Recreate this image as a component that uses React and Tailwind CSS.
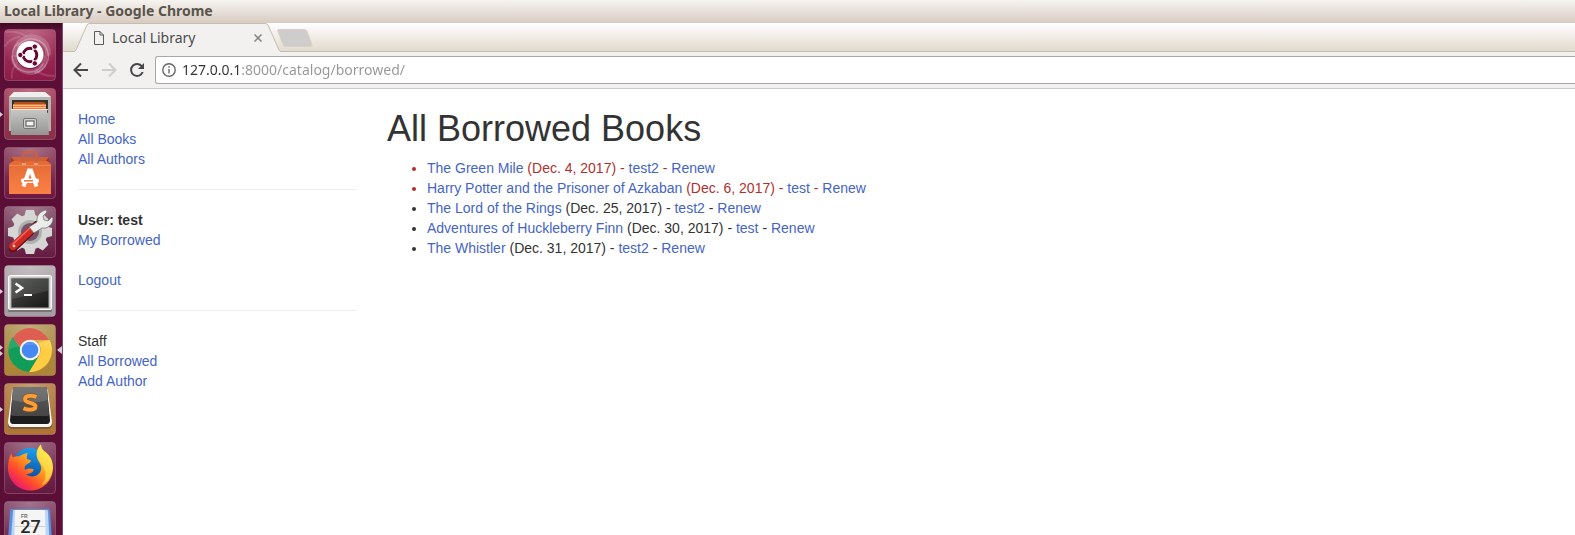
import { useId } from "react";

function Tile({ id, tint, children }) {
  return (
    <svg viewBox="0 0 52 52" className="block size-[52px]" aria-hidden="true">
      <defs>
        <linearGradient id={id} x1="0" y1="0" x2="0" y2="1">
          <stop offset="0" stopColor={tint[0]} />
          <stop offset="1" stopColor={tint[1]} />
        </linearGradient>
        <radialGradient id={id + "-shine"} cx=".5" cy="0" r=".75">
          <stop offset="0" stopColor="#fff" stopOpacity=".25" />
          <stop offset="1" stopColor="#fff" stopOpacity="0" />
        </radialGradient>
      </defs>
      <rect x=".5" y=".5" width="51" height="51" rx="3.5" fill={`url(#${id})`} stroke="#fff" strokeOpacity=".2" />
      <rect x="1" y="1" width="50" height="50" rx="3" fill={`url(#${id}-shine)`} />
      {children}
    </svg>
  );
}

function UbuntuIcon() {
  const id = useId();
  return (
    <Tile id={id} tint={["#a5385f", "#8d1b48"]}>
      <g fill="none" stroke="#fff" strokeLinecap="round">
        <path d="M14 17C22 5 41 9 44 24c2 10-5 18-13 20" strokeOpacity=".3" strokeWidth="1.500" />
        <path d="M39 35C32 48 12 44 9 32 7 25 9 18 14 14" strokeOpacity=".3" strokeWidth="1.500" />
        <path d="M12 25C11 13 24 5 35 10c7 3 9 10 9 14" strokeOpacity=".18" strokeWidth="6" />
        <path d="M40 29c1 11-11 17-21 12-5-2-9-7-9-12" strokeOpacity=".18" strokeWidth="6" />
        <path d="M2 3c8-1 15 1 20 4M1 17c3-5 8-8 14-9M50 47c-7 0-14-2-18-6M8 49c-1-5 1-10 4-14" strokeOpacity=".13" strokeWidth="2" />
      </g>
      <circle cx="26" cy="27" r="13.5" fill="#54052c" fillOpacity=".35" />
      <circle cx="26" cy="25.5" r="13.5" fill="#fff" />
      <circle cx="26" cy="26" r="6.8" fill="none" stroke="#6b0735" strokeWidth="3" />
      <path d="M26 26H16M26 26l5-8.700M26 26l5 8.700" stroke="#fff" strokeWidth="1.600" />
      <circle cx="26" cy="26" r="5.100" fill="#fff" />
      <g fill="#6b0735" stroke="#fff" strokeWidth="1">
        <circle cx="16.3" cy="26" r="2.7" />
        <circle cx="30.8" cy="17.6" r="2.7" />
        <circle cx="30.8" cy="34.4" r="2.7" />
      </g>
    </Tile>
  );
}

function FilesIcon() {
  const id = useId();
  return (
    <Tile id={id} tint={["#a8405b", "#8a3048"]}>
      <defs>
        <linearGradient id={id + "b"} x1="0" y1="0" x2="0" y2="1">
          <stop offset="0" stopColor="#c8c8c6" />
          <stop offset="1" stopColor="#949492" />
        </linearGradient>
      </defs>
      <path d="M10 4h31l6 5v34H5V9z" fill="#b5b5b2" />
      <path d="M10 4h31l6 5H5z" fill="#efefed" />
      <path d="M8 12h36v13H8z" fill="#34322f" />
      <path d="M10 14h30l2 2H10z" fill="#b44d19" />
      <path d="M9 16h33v5H9z" fill="#ef7b35" />
      <path d="M9 17.500h33M9 19.500h33" stroke="#ffc08b" />
      <path d="M7 21h36l2 26H7z" fill={`url(#${id}b)`} />
      <path d="M7 21.500h37" stroke="#e9e9e7" />
      <rect x="19.500" y="30.500" width="13" height="10" rx="1.500" fill="#d0d0ce" stroke="#747472" />
      <rect x="22" y="33" width="8" height="5" fill="#f4f4f2" stroke="#656563" strokeWidth="1.200" />
    </Tile>
  );
}

function SoftwareIcon() {
  const id = useId();
  return (
    <Tile id={id} tint={["#8c4461", "#6d1740"]}>
      <defs>
        <linearGradient id={id + "b"} x1="0" y1="0" x2="0" y2="1">
          <stop offset="0" stopColor="#e46a36" />
          <stop offset="1" stopColor="#fa8145" />
        </linearGradient>
      </defs>
      <path d="M7 10h38v8H7z" fill="#9f391b" />
      <path d="M7 10h38l-4 5H11z" fill="#cf6037" />
      <path d="M5 17l4-3h34l4 3v30H5z" fill={`url(#${id}b)`} />
      <path d="M19.500 17.500V8q0-3 3-3h7q3 0 3 3v9.500" fill="none" stroke="#c96043" strokeWidth="2.600" />
      <path d="M18 17h4M30 17h4" stroke="#efa16e" strokeWidth="2" />
      <path d="M5.500 18.500h41" stroke="#f29b68" strokeOpacity=".6" />
      <path d="M19.500 39.500L25 23.500h2l5.500 16" fill="none" stroke="#fff" strokeWidth="4" />
      <rect x="17" y="31.500" width="18" height="4.500" rx="2" fill="#fff" />
      <path d="M20 33.800h9" stroke="#ef7945" strokeWidth="1.600" />
    </Tile>
  );
}

function SettingsIcon() {
  const id = useId();
  return (
    <Tile id={id} tint={["#85516b", "#651b40"]}>
      <g fill="#d6d6d4">
        {[0, 45, 90, 135].map((a) => (
          <path key={a} d="M20 11l2-7h8l2 7v30l-2 7h-8l-2-7z" transform={`rotate(${a} 26 26)`} />
        ))}
      </g>
      <circle cx="26" cy="26" r="17.500" fill="#d6d6d4" />
      <circle cx="26" cy="26" r="12" fill="#b0b0ae" />
      <circle cx="26" cy="26" r="9" fill="#76536a" />
      <path d="M9 42L33 19" stroke="#60101a" strokeWidth="8.500" strokeLinecap="round" />
      <path d="M9 40.500L27 24" stroke="#cf2a24" strokeWidth="7.500" strokeLinecap="round" />
      <path d="M9 38L26 22" stroke="#f06a5c" strokeWidth="1.500" strokeLinecap="round" />
      <path
        d="M25 21l8-5c-1-7 4-11 9-12l1 2-4 4 1 4 4 1 4-4 1 1c0 7-6 11-11 10l-8 5z"
        fill="#ececea"
        stroke="#777775"
        strokeWidth=".8"
      />
      <circle cx="10" cy="40" r="1.300" fill="#fff" fillOpacity=".8" />
    </Tile>
  );
}

function TerminalIcon() {
  const id = useId();
  return (
    <Tile id={id} tint={["#b0a7ac", "#a59ca2"]}>
      <defs>
        <linearGradient id={id + "b"} x1="0" y1="0" x2="1" y2="1">
          <stop offset="0" stopColor="#4e4e4c" />
          <stop offset=".5" stopColor="#323230" />
          <stop offset="1" stopColor="#171715" />
        </linearGradient>
      </defs>
      <rect x="4" y="10" width="44" height="37" rx="1.500" fill="#777674" />
      <rect x="4.500" y="10.500" width="43" height="34" rx="1" fill="#dededc" stroke="#fafafa" />
      <rect x="7" y="13" width="38" height="30" fill={`url(#${id}b)`} stroke="#aaa9a7" />
      <path d="M8 14h36v12L8 34z" fill="#fff" fillOpacity=".1" />
      <path d="M11.500 18.500l6.500 4.500-6.500 4.500" fill="none" stroke="#fff" strokeWidth="2.600" />
      <path d="M20 30h8" stroke="#fff" strokeWidth="2" />
    </Tile>
  );
}

function ChromeIcon() {
  const id = useId();
  return (
    <Tile id={id} tint={["#ae9150", "#ac8435"]}>
      <path d="M26 4A22 22 0 0 1 45 16H26A10.500 10.500 0 0 0 16 23L8.500 14A22 22 0 0 1 26 4z" fill="#db4c3f" />
      <path d="M45.600 16A22 22 0 0 1 25 48L35 31.500A11 11 0 0 0 33 17.500L26 16z" fill="#ffcd42" />
      <path d="M8.500 13A22 22 0 0 0 25 48L35 31.500A11 11 0 0 1 16.500 31L16 24z" fill="#109d59" />
      <path d="M26 16h19l-11 3z" fill="#87542b" fillOpacity=".25" />
      <circle cx="26" cy="26" r="10.300" fill="#f4f4f4" />
      <circle cx="26" cy="26" r="8.300" fill="#4587f3" />
      <path d="M4 26A22 22 0 0 1 48 26Q26 16 4 26z" fill="#fff" fillOpacity=".1" />
    </Tile>
  );
}

function SublimeIcon() {
  const id = useId();
  return (
    <Tile id={id} tint={["#b27c42", "#b07434"]}>
      <defs>
        <linearGradient id={id + "b"} x1="0" y1="0" x2="0" y2="1">
          <stop offset="0" stopColor="#5d5d5d" />
          <stop offset="1" stopColor="#454545" />
        </linearGradient>
      </defs>
      <path d="M8 8q0-2 2-2h32q2 0 2 2l4 31q0 5-4 5H8q-4 0-4-5z" fill="#f6f6f4" />
      <path d="M4 40q0 4 4 4h36q4 0 4-4 1 6-5 6H9q-6 0-5-6z" fill="#7c5a36" />
      <path d="M9 6q0-2 2-2h30q2 0 2 2l3 31q0 4-3 4H9q-3 0-3-4z" fill="#1c1c1c" />
      <path d="M9 6q0-2 2-2h30q2 0 2 2l2 25q0 2-3 2H10q-3 0-3-2z" fill={`url(#${id}b)`} />
      <path d="M9 6q0-2 2-2h30q2 0 2 2l1 11Q26 22 8 17z" fill="#fff" fillOpacity=".15" />
      <path
        d="M32.500 14C29 12.500 21 12 21 16.200c0 4.300 10.500 3 10.500 7.300 0 4-7.500 3.700-12 1.800"
        fill="none"
        stroke="#8a531d"
        strokeWidth="5.500"
        strokeOpacity=".6"
      />
      <path
        d="M32.500 14C29 12.500 21 12 21 16.200c0 4.300 10.500 3 10.500 7.300 0 4-7.500 3.700-12 1.800"
        fill="none"
        stroke="#ff9d35"
        strokeWidth="3.800"
      />
    </Tile>
  );
}

function FirefoxIcon() {
  const id = useId();
  return (
    <Tile id={id} tint={["#834261", "#641840"]}>
      <defs>
        <linearGradient id={id + "b"} x1=".85" y1=".1" x2=".2" y2=".9">
          <stop offset="0" stopColor="#ffe94a" />
          <stop offset=".45" stopColor="#ff9a1c" />
          <stop offset=".75" stopColor="#ff4a2e" />
          <stop offset="1" stopColor="#ec1c6c" />
        </linearGradient>
        <linearGradient id={id + "c"} x1=".6" y1="0" x2=".4" y2="1">
          <stop offset="0" stopColor="#1aa0f0" />
          <stop offset="1" stopColor="#0b3f92" />
        </linearGradient>
      </defs>
      <circle cx="26" cy="23" r="17" fill={`url(#${id}c)`} />
      <path
        d="M7.500 11c0 2 .5 3.500 1.500 4.500 2-1 4-1.500 6-1 2.500-2 5.500-3 9-3.500-1.500 2.500-1.500 4-1 6 1.500 1 3 .5 4 1.500 0 2.500-4 3-6 5.500-.5 1.500-.5 3 0 4 2.500-1.500 5-2 9-.5-1 3-4 4.500-8 4.500 3 3.500 10 3.500 13.500-1 2.500-3.500 2-7-.5-11C31 14 32 7 37 2.500c0 4 2 6 5 8 5 4 7 9 7 15C49 38.500 39 48.500 26.500 48.500S4 38.500 4 26c0-6 1-11 3.500-15z"
        fill={`url(#${id}b)`}
      />
      <path d="M37 2.500c0 4 2 6 5 8 8 7 9 20 1 29-2 2-4 3-6 4 6-6 6-13 1-20C32 15 32 7 37 2.500z" fill="#fff05a" fillOpacity=".55" />
    </Tile>
  );
}

function CalendarIcon() {
  const id = useId();
  return (
    <Tile id={id} tint={["#84486a", "#6d2449"]}>
      <path d="M8 8h36q2 0 2 3l3 41H3l3-41q0-3 2-3z" fill="#5c8fd8" />
      <path d="M9 10q0-1 1-1h32q2 0 2 1l2 42H6z" fill="#b9d5fc" />
      <path d="M11 9h30l1 43H10z" fill="#f5f5f3" />
      <path d="M11 25h30v1H11z" fill="#d1d1cf" />
      <text x="17" y="17" fill="#6f6f6d" className="font-['Liberation_Sans'] text-[5px] font-bold">FR</text>
      <text x="26.500" y="32" textAnchor="middle" fill="#2b2b2b" className="font-['Roboto'] text-[18px] font-medium">27</text>
    </Tile>
  );
}

const launchers = [
  { name: "Search your computer", Icon: UbuntuIcon, windows: 0 },
  { name: "Files", Icon: FilesIcon, windows: 1 },
  { name: "Ubuntu Software", Icon: SoftwareIcon, windows: 0 },
  { name: "System Settings", Icon: SettingsIcon, windows: 0 },
  { name: "Terminal", Icon: TerminalIcon, windows: 1 },
  { name: "Google Chrome", Icon: ChromeIcon, windows: 2, active: true },
  { name: "Sublime Text", Icon: SublimeIcon, windows: 1 },
  { name: "Firefox", Icon: FirefoxIcon, windows: 0 },
  { name: "Calendar", Icon: CalendarIcon, windows: 0 },
];

function Pip() {
  return (
    <svg viewBox="0 0 3 5" className="block h-[5px] w-[3px]" aria-hidden="true">
      <path d="M0 0l3 2.500-3 2.500z" fill="#d8cdd3" />
    </svg>
  );
}

function Launcher() {
  return (
    <nav
      aria-label="Launcher"
      className="flex w-[63px] shrink-0 flex-col gap-[7px] overflow-hidden border-r border-[#7c4a78] bg-[#5c0f36] bg-linear-to-b from-[#3d0a24] to-[#5c0f36] to-[8px] pt-[6px]"
    >
      {launchers.map(({ name, Icon, windows, active }) => (
        <div key={name} className="flex h-[52px] shrink-0 items-center">
          <span className="flex w-1 flex-col gap-px">
            {Array.from({ length: windows }, (_, i) => (
              <Pip key={i} />
            ))}
          </span>
          <button type="button" aria-label={name}>
            <Icon />
          </button>
          {active && (
            <svg viewBox="0 0 5 8" className="ml-px h-2 w-[5px]" aria-hidden="true">
              <path d="M5 0v8L0 4z" fill="#d8cdd3" />
            </svg>
          )}
        </div>
      ))}
    </nav>
  );
}

function TabStrip() {
  return (
    <div className="flex h-[29px] items-stretch border-b border-[#c6bdb0] bg-linear-to-b from-white to-[#e1dacd] pl-[11px]">
      <div className="relative -mb-px flex w-[207px] items-center pl-[20px] pr-[19px]">
        <svg viewBox="0 0 207 29" className="absolute inset-0 h-full w-full" aria-hidden="true">
          <path d="M0 29L1 28 13 2Q14 .5 16 .5H191Q193 .5 194 2L206 28 207 29z" fill="#f2f1f0" />
          <path d="M0 28.500Q1 28.500 2 27L13 2Q14 .5 16 .5H191Q193 .5 194 2L205 27Q206 28.500 207 28.500" fill="none" stroke="#c6bdb0" />
        </svg>
        <button type="button" className="relative flex flex-1 items-center gap-2 text-left">
          <svg viewBox="0 0 10 14" className="h-[14px] w-[10px]" fill="none" stroke="#5a5a5a" aria-hidden="true">
            <path d="M.5.5H6L9.500 4v9.500H.5zM6 .5V4h3.500" />
          </svg>
          <span className="text-[14px] leading-5 text-[#4c4c4c]">Local Library</span>
        </button>
        <button type="button" aria-label="Close tab" className="relative">
          <svg viewBox="0 0 8 8" className="size-2" stroke="#828282" strokeWidth="1.500" aria-hidden="true">
            <path d="M.5.5l7 7M7.500.5l-7 7" />
          </svg>
        </button>
      </div>
      <button type="button" aria-label="New tab" className="-ml-1 self-center pt-[2px]">
        <svg viewBox="0 0 36 18" className="block h-[18px] w-9" aria-hidden="true">
          <path d="M2 .5H27Q29 .5 30 2.500L35 16Q35.500 17.500 33.500 17.500H9Q7 17.500 6 15.500L.8 2Q.5.500 2 .5z" fill="#cfcdcb" stroke="#d6d0c6" />
        </svg>
      </button>
    </div>
  );
}

function Toolbar() {
  return (
    <div className="flex h-[37px] items-center border-b border-[#cbcac9] bg-[#f2f1f0] pl-[10px]">
      <div className="flex items-center gap-3">
        <button type="button" aria-label="Back">
          <svg viewBox="0 0 16 16" className="size-4" fill="none" stroke="#484848" strokeWidth="2" aria-hidden="true">
            <path d="M15 8H2M8 1.500L1.500 8 8 14.500" />
          </svg>
        </button>
        <button type="button" aria-label="Forward" disabled>
          <svg viewBox="0 0 16 16" className="size-4" fill="none" stroke="#cecdcc" strokeWidth="2" aria-hidden="true">
            <path d="M1 8h13M8 1.500L14.500 8 8 14.500" />
          </svg>
        </button>
        <button type="button" aria-label="Reload">
          <svg viewBox="0 0 16 16" className="size-4" fill="none" stroke="#484848" strokeWidth="2" aria-hidden="true">
            <path d="M13 4.500A6 6 0 1 0 13.700 10" />
            <path d="M15 1v6H9z" fill="#484848" stroke="none" />
          </svg>
        </button>
      </div>
      <div className="ml-[10px] flex h-7 flex-1 items-center gap-[6px] rounded-l-[3px] border border-r-0 border-[#a9a8a7] bg-white pl-[6px]">
        <svg viewBox="0 0 14 14" className="size-[14px] shrink-0" fill="none" stroke="#666" strokeWidth="1.400" aria-hidden="true">
          <circle cx="7" cy="7" r="6.200" />
          <path d="M7 6v4.500M7 3.300v1.500" />
        </svg>
        <input
          type="text"
          aria-label="Address"
          defaultValue="127.0.0.1:8000/catalog/borrowed/"
          className="min-w-0 flex-1 bg-linear-to-r from-[#333] from-[57px] to-[#969696] to-[57px] bg-clip-text text-[14px] leading-5 text-transparent outline-none"
        />
      </div>
    </div>
  );
}

function PageLink({ children }) {
  return (
    <a href="#" className="text-[#4565c4] hover:underline">
      {children}
    </a>
  );
}

const loans = [
  { title: "The Green Mile", due: "Dec. 4, 2017", user: "test2", overdue: true },
  { title: "Harry Potter and the Prisoner of Azkaban", due: "Dec. 6, 2017", user: "test", overdue: true },
  { title: "The Lord of the Rings", due: "Dec. 25, 2017", user: "test2" },
  { title: "Adventures of Huckleberry Finn", due: "Dec. 30, 2017", user: "test" },
  { title: "The Whistler", due: "Dec. 31, 2017", user: "test2" },
];

function Sidebar() {
  return (
    <nav aria-label="Library" className="w-[309px] shrink-0 px-[15px]">
      <ul>
        <li><PageLink>Home</PageLink></li>
        <li><PageLink>All Books</PageLink></li>
        <li><PageLink>All Authors</PageLink></li>
      </ul>
      <hr className="my-5 border-[#eee]" />
      <ul>
        <li className="font-bold">User: test</li>
        <li><PageLink>My Borrowed</PageLink></li>
        <li className="mt-5"><PageLink>Logout</PageLink></li>
      </ul>
      <hr className="my-5 border-[#eee]" />
      <ul>
        <li>Staff</li>
        <li><PageLink>All Borrowed</PageLink></li>
        <li><PageLink>Add Author</PageLink></li>
      </ul>
    </nav>
  );
}

export default function App() {
  return (
    <div className="flex h-screen flex-col overflow-hidden bg-white font-['Noto_Sans',sans-serif]">
      <header className="flex h-[23px] shrink-0 items-center bg-linear-to-b from-[#f6f4f0] to-[#d8ccc2] px-1 pb-[2px]">
        <span className="text-[14px] leading-5 font-bold text-[#5b544c]">Local Library - Google Chrome</span>
      </header>
      <div className="flex min-h-0 flex-1">
        <Launcher />
        <div className="flex min-w-0 flex-1 flex-col">
          <TabStrip />
          <Toolbar />
          <div className="flex flex-1 pt-5 font-['Liberation_Sans',sans-serif] text-[14px] leading-5 text-[#333]">
            <Sidebar />
            <main className="min-w-0 flex-1 px-[15px]">
              <h1 className="mb-[9px] text-[36px] leading-10">All Borrowed Books</h1>
              <ul className="list-disc pl-10">
                {loans.map(({ title, due, user, overdue }) => (
                  <li key={title} className={overdue ? "text-[#b12f2d]" : "text-[#333]"}>
                    <PageLink>{title}</PageLink> ({due}) - <PageLink>{user}</PageLink> - <PageLink>Renew</PageLink>
                  </li>
                ))}
              </ul>
            </main>
          </div>
        </div>
      </div>
    </div>
  );
}
